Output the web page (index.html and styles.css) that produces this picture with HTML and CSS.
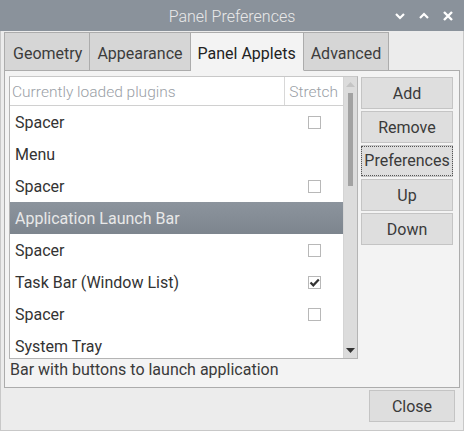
FILE: index.html
```html
<!DOCTYPE html>
<html>
<head>
<meta charset="utf-8">
<link rel="stylesheet" href="styles.css">
</head>
<body>
<div class="window">
  <div class="titlebar">
    <span class="title">Panel Preferences</span>
    <div class="wm">
      <svg width="12" height="12" viewBox="0 0 12 12"><path d="M2 4 L6 8 L10 4" fill="none" stroke="#fff" stroke-width="2.2"/></svg>
      <svg width="12" height="12" viewBox="0 0 12 12"><path d="M2 8 L6 4 L10 8" fill="none" stroke="#fff" stroke-width="2.2"/></svg>
      <svg width="12" height="12" viewBox="0 0 12 12"><path d="M2 2 L10 10 M10 2 L2 10" fill="none" stroke="#fff" stroke-width="2.4"/></svg>
    </div>
  </div>
  <div class="body">
    <div class="tabs">
      <div class="tab">Geometry</div>
      <div class="tab">Appearance</div>
      <div class="tab active">Panel Applets</div>
      <div class="tab">Advanced</div>
    </div>
    <div class="page">
      <div class="main">
        <div class="tree">
          <div class="list">
            <div class="head">
              <div class="c1">Currently loaded plugins</div>
              <div class="c2">Stretch</div>
            </div>
            <div class="row"><div class="c1">Spacer</div><div class="c2"><span class="cb"></span></div></div>
            <div class="row"><div class="c1">Menu</div><div class="c2"></div></div>
            <div class="row"><div class="c1">Spacer</div><div class="c2"><span class="cb"></span></div></div>
            <div class="row sel"><div class="c1">Application Launch Bar</div><div class="c2"></div></div>
            <div class="row"><div class="c1">Spacer</div><div class="c2"><span class="cb"></span></div></div>
            <div class="row"><div class="c1">Task Bar (Window List)</div><div class="c2"><span class="cb on"><svg width="11" height="11" viewBox="0 0 11 11"><path d="M1.5 5.5 L4.3 8.3 L9.8 2.5" fill="none" stroke="#333" stroke-width="2.2"/></svg></span></div></div>
            <div class="row"><div class="c1">Spacer</div><div class="c2"><span class="cb"></span></div></div>
            <div class="row"><div class="c1">System Tray</div><div class="c2"></div></div>
          </div>
          <div class="scroll">
            <svg class="arr" width="9" height="5" viewBox="0 0 9 5"><path d="M0 5 L4.5 0 L9 5Z" fill="#c4c4c4"/></svg>
            <div class="thumb"></div>
            <div class="spacer"></div>
            <svg class="arr" width="9" height="5" viewBox="0 0 9 5"><path d="M0 0 L4.5 5 L9 0Z" fill="#333"/></svg>
          </div>
        </div>
        <div class="buttons">
          <div class="btn">Add</div>
          <div class="btn">Remove</div>
          <div class="btn focus"><span>Preferences</span></div>
          <div class="btn">Up</div>
          <div class="btn">Down</div>
        </div>
      </div>
      <div class="status">Bar with buttons to launch application</div>
    </div>
    <div class="footer">
      <div class="btn close">Close</div>
    </div>
  </div>
</div>
</body>
</html>
```
FILE: styles.css
```css
* { box-sizing: border-box; }
html, body { margin: 0; padding: 0; }
body {
  width: 464px;
  height: 431px;
  font-family: Roboto, "Noto Sans", sans-serif;
  font-size: 16px;
  color: #333;
  background: #ececec;
  overflow: hidden;
}
.window {
  width: 464px;
  height: 431px;
  display: flex;
  flex-direction: column;
  border: 1px solid #c8c8c8;
  border-top: none;
  background: #ececec;
}
.titlebar {
  height: 31px;
  margin: 0 -1px;
  background: #8a929b;
  position: relative;
  display: flex;
  align-items: center;
  justify-content: center;
}
.title {
  color: #e9e9e9;
  font-size: 16px;
  font-weight: 300;
  margin-top: 1px;
}
.wm {
  position: absolute;
  right: 10px;
  top: 10px;
  display: flex;
  gap: 12px;
}
.wm svg { display: block; }
.body {
  flex: 1;
  padding: 1px 2px 0 3px;
  display: flex;
  flex-direction: column;
}
.tabs {
  display: flex;
  height: 39px;
  align-items: flex-end;
}
.tab {
  height: 39px;
  padding: 2px 7px 0 7px;
  line-height: 37px;
  background: #d6d6d6;
  border: 1px solid #acacac;
  border-left: none;
  color: #3c3c3c;
  font-size: 16px;
}
.tab:first-child { border-left: 1px solid #acacac; padding-left: 8px; }
.tab.active {
  background: #f3f3f3;
  border-bottom-color: #f3f3f3;
  color: #222;
  position: relative;
  z-index: 1;
}
.page {
  margin-top: -1px;
  height: 318px;
  background: #f3f3f3;
  border: 1px solid #acacac;
  padding: 5px 0 0 4px;
  margin-right: 1px;
}
.main {
  display: flex;
  gap: 3px;
}
.tree {
  width: 349px;
  height: 283px;
  display: flex;
  border: 1px solid #b4b4b4;
  border-top-color: #c8c8c8;
  background: #fff;
}
.list {
  flex: 1;
  overflow: hidden;
}
.head {
  display: flex;
  height: 29px;
  border-bottom: 1px solid #d0d0d0;
  color: #9aa0a6;
  font-size: 15.5px;
}
.head .c1 {
  flex: 1;
  padding-left: 2px;
  line-height: 30px;
  font-weight: 300;
}
.head .c2 {
  width: 59px;
  border-left: 1px solid #d8d8d8;
  line-height: 30px;
  text-align: right;
  padding-right: 5px;
  font-weight: 300;
}
.row {
  display: flex;
  height: 32px;
  align-items: center;
}
.row .c1 { flex: 1; padding-left: 5px; }
.row .c2 {
  width: 59px;
  display: flex;
  justify-content: flex-end;
  padding-right: 22px;
}
.row.sel {
  background: linear-gradient(#8c949d, #7d858e);
  color: #e8e8e8;
}
.cb {
  width: 13px;
  height: 13px;
  border: 1px solid #b8b8b8;
  background: #fff;
  display: flex;
  align-items: center;
  justify-content: center;
}
.cb svg { display: block; }
.scroll {
  width: 14px;
  background: #dcdcdc;
  border-left: 1px solid #d4d4d4;
  display: flex;
  flex-direction: column;
  align-items: center;
  padding: 5px 0 5px;
}
.arr { display: block; flex: none; }
.thumb {
  width: 5px;
  height: 93px;
  margin-top: 6px;
  background: #a2a2a2;
}
.spacer { flex: 1; }
.buttons {
  display: flex;
  flex-direction: column;
  gap: 2px;
  padding-top: 1px;
}
.btn {
  width: 92px;
  height: 32px;
  background: #dedede;
  border: 1px solid #c4c4c4;
  display: flex;
  align-items: center;
  justify-content: center;
  color: #3a3a3a;
  font-size: 16px;
}
.btn.focus span {
  outline: 1px dotted #555;
  outline-offset: 1px;
  padding: 0 1px;
  line-height: 26px;
  width: 88px;
  text-align: center;
}
.status {
  padding-left: 1px;
  line-height: 22px;
  color: #3a3a3a;
}
.footer {
  display: flex;
  justify-content: flex-end;
  padding: 2px 6px 0 0;
}
.close {
  width: 86px;
  height: 32px;
}
```
